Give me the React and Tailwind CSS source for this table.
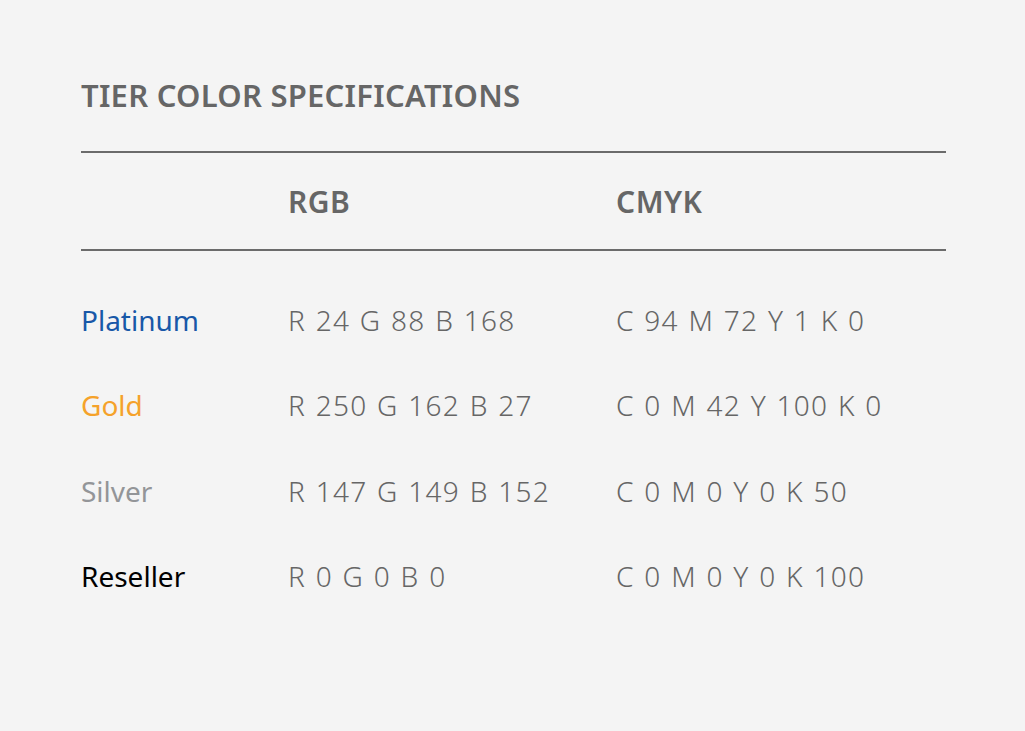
const tiers = [
  { name: 'Platinum', color: 'text-[#1858a8]', rgb: 'R 24 G 88 B 168', cmyk: 'C 94 M 72 Y 1 K 0' },
  { name: 'Gold', color: 'text-[#f5a22a]', rgb: 'R 250 G 162 B 27', cmyk: 'C 0 M 42 Y 100 K 0' },
  { name: 'Silver', color: 'text-[#939598]', rgb: 'R 147 G 149 B 152', cmyk: 'C 0 M 0 Y 0 K 50' },
  { name: 'Reseller', color: 'text-black', rgb: 'R 0 G 0 B 0', cmyk: 'C 0 M 0 Y 0 K 100' },
]

const App = () => {
  return (
    <div className="w-[1025px] h-[731px] bg-[#f4f4f4] pl-[81px] pt-[76px] font-['Noto_Sans',sans-serif] text-[#666666]">
      <div className="w-[865px]">
        <h1 className="text-[31px] leading-[38px] font-semibold tracking-[0.25px]">TIER COLOR SPECIFICATIONS</h1>

        <div className="mt-[37px] border-t-2 border-[#6b6b6b]" />
        <div className="grid grid-cols-[207px_328px_1fr] h-[96px] items-center text-[30px] font-semibold tracking-[0.5px]">
          <div />
          <div>RGB</div>
          <div>CMYK</div>
        </div>
        <div className="border-t-2 border-[#6b6b6b]" />

        <div className="pt-[26px]">
          {tiers.map(({ name, color, rgb, cmyk }) => (
            <div key={name} className="grid grid-cols-[207px_328px_1fr] h-[85.5px] items-center text-[28px] font-light">
              <div className={`${color} font-normal`}>{name}</div>
              <div className="tracking-[1.3px] [word-spacing:1px]">{rgb}</div>
              <div className="tracking-[1.3px] [word-spacing:1px]">{cmyk}</div>
            </div>
          ))}
        </div>
      </div>
    </div>
  )
}

export default App
